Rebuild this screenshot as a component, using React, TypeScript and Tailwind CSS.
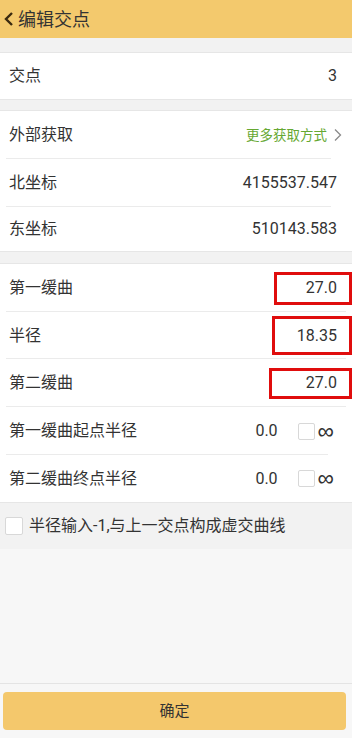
import { FC } from "react";

const font = { fontFamily: "Roboto, 'Noto Sans CJK SC', sans-serif" };

type RowProps = {
  label: string;
  children?: React.ReactNode;
  last?: boolean;
  h?: string;
};

const Row: FC<RowProps> = ({ label, children, last, h = "h-[48px]" }) => (
  <div className={`${h} flex items-center justify-between pl-[9px] relative`}>
    <span className="text-[16px] text-[#333]">{label}</span>
    <div className="flex items-center">{children}</div>
    {!last && <div className="absolute bottom-0 left-[6px] right-[6px] h-px bg-[#ebebeb]" />}
  </div>
);

const Box: FC<{ value: string; w: string; h: string }> = ({ value, w, h }) => (
  <div className={`${w} ${h} border-[3px] border-[#e00d0d] flex items-center justify-end pr-[12px] text-[16px] text-[#333]`}>
    {value}
  </div>
);

const Check: FC<{ size?: string }> = ({ size = "w-[17px] h-[17px]" }) => (
  <div className={`${size} border border-[#d8d8d8] rounded-[2px] bg-white`} />
);

const Inf = () => (
  <span className="text-[23px] text-[#333] ml-[3px] leading-none" style={{ fontFamily: "'Liberation Sans', sans-serif" }}>
    ∞
  </span>
);

export default function App() {
  return (
    <div className="w-[352px] h-[738px] flex flex-col bg-[#f6f6f6]" style={font}>
      <div className="h-[38px] bg-[#f3c96d] flex items-center pl-[3px] shadow-[0_1px_2px_rgba(0,0,0,0.08)]">
        <svg width="12" height="16" viewBox="0 0 12 16" className="mr-[3px]">
          <path d="M9 2 L3 8 L9 14" stroke="#3a2a10" strokeWidth="2.4" fill="none" />
        </svg>
        <span className="text-[18px] text-[#333]">编辑交点</span>
      </div>
      <div className="h-[14px] bg-[#f2f2f2]" />
      <div className="bg-white border-y border-[#e6e6e6] pr-[15px]">
        <Row label="交点" last h="h-[46px]">
          <span className="text-[16px] text-[#333]">3</span>
        </Row>
      </div>
      <div className="h-[10px] bg-[#f2f2f2]" />
      <div className="bg-white border-y border-[#e6e6e6] pr-[15px]">
        <Row label="外部获取">
          <span className="text-[13.5px] text-[#66a832]">更多获取方式</span>
          <svg width="10" height="14" viewBox="0 0 10 14" className="ml-[6px] -mr-[6px]">
            <path d="M2 1.5 L7.5 7 L2 12.5" stroke="#8a8a8a" strokeWidth="1.3" fill="none" />
          </svg>
        </Row>
        <Row label="北坐标">
          <span className="text-[16px] text-[#333]">4155537.547</span>
        </Row>
        <Row label="东坐标" last h="h-[44px]">
          <span className="text-[16px] text-[#333]">510143.583</span>
        </Row>
      </div>
      <div className="h-[11px] bg-[#f2f2f2]" />
      <div className="bg-white border-y border-[#e6e6e6]">
        <Row label="第一缓曲" h="h-[48px]">
          <Box value="27.0" w="w-[78px]" h="h-[33px]" />
        </Row>
        <Row label="半径" h="h-[47px]">
          <Box value="18.35" w="w-[80px]" h="h-[39px]" />
        </Row>
        <Row label="第二缓曲" h="h-[48px]">
          <Box value="27.0" w="w-[83px]" h="h-[31px]" />
        </Row>
        <div className="pr-[18px]">
          <Row label="第一缓曲起点半径">
            <span className="text-[16px] text-[#333] mr-[20px]">0.0</span>
            <Check />
            <Inf />
          </Row>
          <Row label="第二缓曲终点半径" last h="h-[47px]">
            <span className="text-[16px] text-[#333] mr-[20px]">0.0</span>
            <Check />
            <Inf />
          </Row>
        </div>
      </div>
      <div className="h-[46px] bg-[#f2f2f2] flex items-center pl-[5px]">
        <Check size="w-[18px] h-[18px]" />
        <span className="ml-[6px] text-[16px] text-[#333]">半径输入-1,与上一交点构成虚交曲线</span>
      </div>
      <div className="flex-1 bg-[#f7f7f7]" />
      <div className="border-t border-[#e4e4e4] bg-[#f7f7f7] px-[3px] pt-[8px] pb-[8px]">
        <button className="w-[343px] h-[38px] rounded-[4px] bg-[#f4c86c] text-[15px] text-[#333]">
          确定
        </button>
      </div>
    </div>
  );
}
